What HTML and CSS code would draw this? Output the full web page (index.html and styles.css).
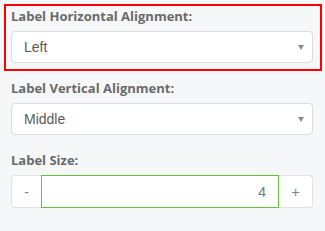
FILE: index.html
```html
<!DOCTYPE html>
<html>
	<head>
		<meta http-equiv="content-type" content="text/html;charset=UTF-8" />
		<link rel="stylesheet" href="styles.css">
	</head>

	<body>
		<div class="panel">
			<div class="field active">
				<div class="fieldLabel">Label Horizontal Alignment:</div>
				<div class="select">
					<span class="selectVal">Left</span>
					<span class="caret"></span>
				</div>
			</div>
			<div class="field">
				<div class="fieldLabel">Label Vertical Alignment:</div>
				<div class="select">
					<span class="selectVal">Middle</span>
					<span class="caret"></span>
				</div>
			</div>
			<div class="field">
				<div class="fieldLabel">Label Size:</div>
				<div class="stepper">
					<span class="stepBtn minus">-</span>
					<span class="stepInput">4</span>
					<span class="stepBtn plus">+</span>
				</div>
			</div>
		</div>
	</body>
</html>
```

FILE: styles.css
```css
html, body{
	margin: 0;
	height: 100%;
	background-color: #f6f7f9;
}
.panel{
	padding: 6px 5px 0 6px;
	display: flex;
	flex-direction: column;
	gap: 9px;
}
.field{
	padding: 1px 7px 6px 5px;
}
.active{
	outline: solid 2px #ff0000;
}
.fieldLabel{
	font-family: "Open Sans", sans-serif;
	font-size: 13px;
	font-weight: bold;
	line-height: 18px;
	color: #6a6a6a;
	margin-bottom: 6px;
}
.select{
	height: 32px;
	box-sizing: border-box;
	border: solid 1px #dcdcdc;
	border-radius: 4px;
	background-color: #fff;
	padding: 0 8px 0 12px;
	display: flex;
	align-items: center;
	justify-content: space-between;
	font-family: "Liberation Sans", Arial, sans-serif;
	font-size: 14px;
	color: #5a5a5a;
}
.caret{
	width: 0;
	height: 0;
	border-left: solid 3.5px transparent;
	border-right: solid 3.5px transparent;
	border-top: solid 5px #8c8c8c;
	margin-top: 1px;
}
.stepper{
	height: 33px;
	display: flex;
	font-family: "Liberation Sans", Arial, sans-serif;
	font-size: 14px;
	color: #777;
}
.stepBtn{
	background-color: #fff;
	border: solid 1px #e2e2e2;
	display: flex;
	align-items: center;
	justify-content: center;
	box-sizing: border-box;
	color: #808080;
}
.minus{
	width: 30px;
	border-right: none;
	border-radius: 4px 0 0 4px;
}
.plus{
	width: 34px;
	border-left: none;
	border-radius: 0 4px 4px 0;
}
.stepInput{
	flex-grow: 1;
	background-color: #fff;
	border: solid 1px #67c23a;
	box-sizing: border-box;
	display: flex;
	align-items: center;
	justify-content: flex-end;
	padding-right: 12px;
	color: #777;
}
```
